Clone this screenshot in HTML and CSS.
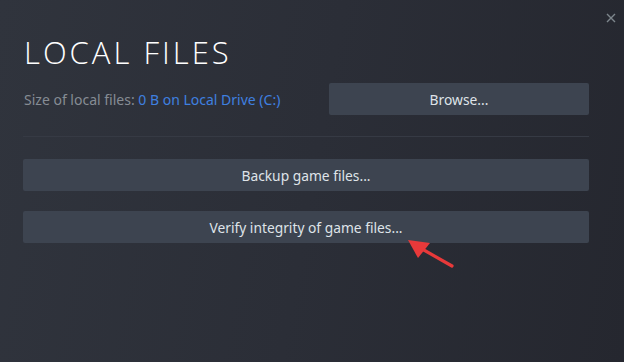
FILE: index.html
```html
<!DOCTYPE html>
<html>
<head>
    <meta charset="UTF-8">
    <title>Local Files</title>
    <link rel="stylesheet" href="styles.css">
</head>
<body>
    <div class="dialog">
        <div class="close">
            <svg width="10" height="10" viewBox="0 0 10 10"><path d="M1 1L9 9M9 1L1 9" stroke="#7d868c" stroke-width="1.4"/></svg>
        </div>
        <h1 class="title">LOCAL FILES</h1>
        <div class="row">
            <div class="size">Size of local files: <span class="drive">0 B on Local Drive (C:)</span></div>
            <button class="btn browse">Browse...</button>
        </div>
        <div class="sep"></div>
        <button class="btn wide">Backup game files...</button>
        <button class="btn wide">Verify integrity of game files...</button>
        <svg class="arrow" width="60" height="44" viewBox="0 0 60 44">
            <path d="M47 31L10 10" stroke="#e8393a" stroke-width="3.2" stroke-linecap="round"/>
            <path d="M3 5L25 8L13 23Z" fill="#e8393a"/>
        </svg>
    </div>
</body>
</html>
```

FILE: styles.css
```css
body {
    margin: 0;
    padding: 0;
    font-family: "Noto Sans", "Open Sans", sans-serif;
}
.dialog {
    position: relative;
    width: 624px;
    height: 362px;
    box-sizing: border-box;
    padding: 30px 35px 0 23px;
    background: linear-gradient(100deg, #30343d 0%, #2b2e37 50%, #25272f 100%);
    overflow: hidden;
}
.close {
    position: absolute;
    top: 6px;
    right: 8px;
}
.title {
    margin: 0 0 0 1px;
    font-family: "Open Sans", sans-serif;
    font-weight: 300;
    font-size: 31px;
    line-height: 44px;
    letter-spacing: 3px;
    color: #ffffff;
}
.row {
    display: flex;
    align-items: center;
    justify-content: space-between;
    margin-top: 9px;
}
.size {
    padding-left: 1px;
    font-size: 14px;
    color: #868c94;
}
.drive {
    color: #3f80e0;
}
.btn {
    display: block;
    height: 32px;
    border: none;
    border-radius: 2px;
    background: #3d4450;
    color: #dfe3e8;
    font-family: "Noto Sans", sans-serif;
    font-size: 13.8px;
    padding: 0;
}
.browse {
    width: 260px;
}
.sep {
    height: 1px;
    background: #363a44;
    margin-top: 21px;
}
.wide {
    width: 566px;
    margin-top: 22px;
}
.wide + .wide {
    margin-top: 20px;
}
.arrow {
    position: absolute;
    left: 405px;
    top: 235px;
}
```
